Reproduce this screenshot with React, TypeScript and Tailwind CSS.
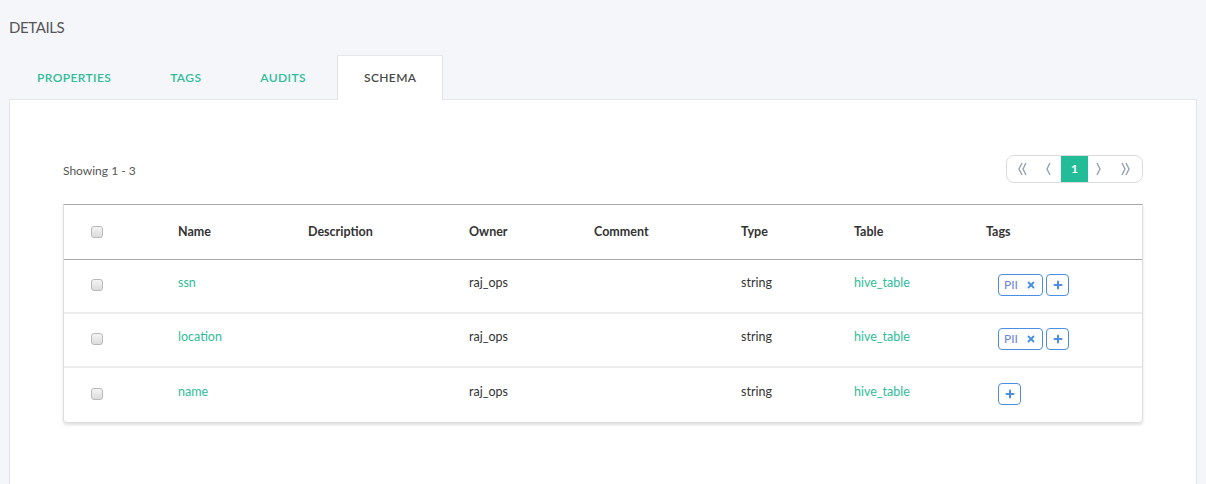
import { Plus, X } from "lucide-react";

const columns = [
  { key: "check", label: "" },
  { key: "name", label: "Name" },
  { key: "description", label: "Description" },
  { key: "owner", label: "Owner" },
  { key: "comment", label: "Comment" },
  { key: "type", label: "Type" },
  { key: "table", label: "Table" },
  { key: "tags", label: "Tags" },
];

const rows = [
  { name: "ssn", owner: "raj_ops", type: "string", table: "hive_table", tags: ["PII"] },
  { name: "location", owner: "raj_ops", type: "string", table: "hive_table", tags: ["PII"] },
  { name: "name", owner: "raj_ops", type: "string", table: "hive_table", tags: [] as string[] },
];

const gridCols = "grid grid-cols-[114px_130px_161px_125px_147px_113px_132px_1fr] items-center";

const Checkbox = () => (
  <span className="ml-[27px] block w-[12px] h-[12px] rounded-[3px] border border-[#b9b9b9] bg-gradient-to-b from-[#f4f4f4] to-[#dcdcdc]" />
);

const Chevron = ({ dir, double }: { dir: "left" | "right"; double?: boolean }) => {
  const one = dir === "left" ? "M4 1 L1 7 L4 13" : "M1 1 L4 7 L1 13";
  const two = dir === "left" ? "M8 1 L5 7 L8 13" : "M5 1 L8 7 L5 13";
  return (
    <svg width={double ? 9 : 5} height="14" viewBox={double ? "0 0 9 14" : "0 0 5 14"} fill="none">
      <path d={one} stroke="#96a0b4" strokeWidth="1.4" />
      {double && <path d={two} stroke="#96a0b4" strokeWidth="1.4" />}
    </svg>
  );
};

const App = () => {
  const tabs = ["PROPERTIES", "TAGS", "AUDITS", "SCHEMA"];

  return (
    <div
      className="min-h-screen bg-[#f5f6fa] px-[9px] pt-[17px]"
      style={{ fontFamily: "Lato, 'Liberation Sans', sans-serif" }}
    >
      {/* Header */}
      <h2 className="text-[15px] leading-[20px] text-[#555] tracking-[-0.4px]">DETAILS</h2>

      {/* Tabs */}
      <div className="flex gap-[3px] mt-[18px] relative z-10">
        {tabs.map((tab) => {
          const active = tab === "SCHEMA";
          return (
            <div
              key={tab}
              className={`h-[45px] flex items-center text-[12px] font-semibold tracking-[0.4px] ${
                active
                  ? "bg-white border border-b-0 border-[#e3e5ea] text-[#4a4a4a] px-[26px]"
                  : "text-[#2ebd98] px-[28px]"
              }`}
            >
              {tab}
            </div>
          );
        })}
      </div>

      {/* Panel */}
      <div className="bg-white border border-[#e3e5ea] -mt-px min-h-[400px] px-[53px] pt-[55px]">
        <div className="flex items-center justify-between h-[28px]">
          <span className="text-[12px] text-[#555] pt-[3px]">Showing 1 - 3</span>
          <div className="flex items-stretch h-[28px] w-[137px] border border-[#dcdcdc] rounded-[8px] overflow-hidden">
            <div className="w-[27px] ml-[2px] flex items-center justify-center">
              <Chevron dir="left" double />
            </div>
            <div className="w-[25px] flex items-center justify-center">
              <Chevron dir="left" />
            </div>
            <div className="w-[27px] bg-[#22bd98] text-white text-[12px] font-bold flex items-center justify-center">
              1
            </div>
            <div className="w-[20px] flex items-center justify-center">
              <Chevron dir="right" />
            </div>
            <div className="w-[34px] flex items-center justify-center">
              <Chevron dir="right" double />
            </div>
          </div>
        </div>

        {/* Table */}
        <div className="mt-[21px] border border-[#dedede] border-t-[#a9a9a9] rounded-b-[4px] shadow-[0_2px_3px_rgba(0,0,0,0.12)]">
          <div className={`${gridCols} h-[55px] border-b border-[#a9a9a9]`}>
            {columns.map((col) =>
              col.key === "check" ? (
                <div key={col.key}>
                  <Checkbox />
                </div>
              ) : (
                <div key={col.key} className="text-[12.5px] font-bold text-[#333]">
                  {col.label}
                </div>
              )
            )}
          </div>
          {rows.map((row, i) => (
            <div
              key={row.name}
              className={`${gridCols} h-[54px] pb-[5px] ${i < rows.length - 1 ? "border-b-2 border-[#ededed]" : ""}`}
            >
              <div className="pt-[2px]">
                <Checkbox />
              </div>
              <div className="text-[12.5px] text-[#2ebd98]">{row.name}</div>
              <div />
              <div className="text-[12.5px] text-[#333]">{row.owner}</div>
              <div />
              <div className="text-[12.5px] text-[#333]">{row.type}</div>
              <div className="text-[12.5px] text-[#2ebd98]">{row.table}</div>
              <div className="flex items-center gap-[3px] ml-[12px] pt-[3px]">
                {row.tags.map((tag) => (
                  <span
                    key={tag}
                    className="h-[22px] w-[45px] flex items-center justify-between pl-[5px] pr-[6px] border border-[#4a90e2] rounded-[4px] text-[12px] text-[#6b7fe0]"
                  >
                    {tag}
                    <X className="w-[10px] h-[10px] text-[#4a90e2]" strokeWidth={4.5} />
                  </span>
                ))}
                <span className="h-[22px] w-[23px] flex items-center justify-center border border-[#4a90e2] rounded-[4px]">
                  <Plus className="w-[12px] h-[12px] text-[#4a90e2]" strokeWidth={4} />
                </span>
              </div>
            </div>
          ))}
        </div>
      </div>
    </div>
  );
};

export default App;
